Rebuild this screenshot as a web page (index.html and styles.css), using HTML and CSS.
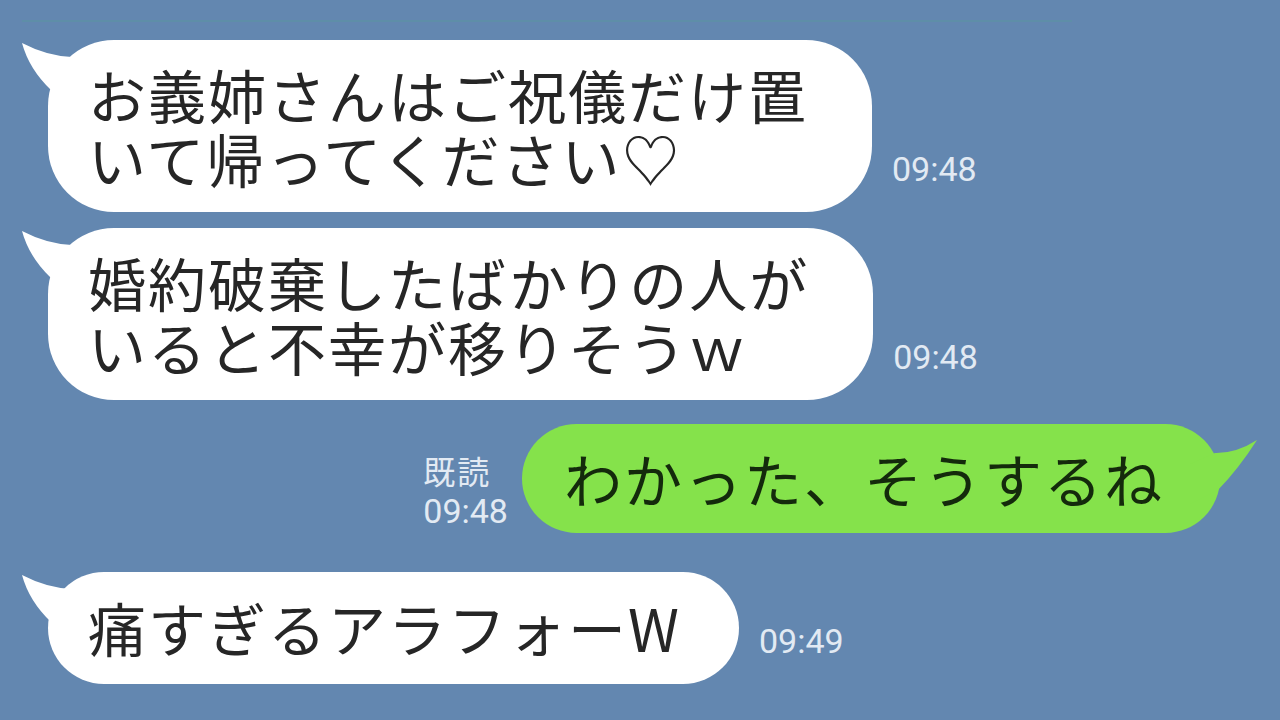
FILE: index.html
```html
<!DOCTYPE html>
<html lang="ja">
<head>
    <meta charset="UTF-8">
    <meta name="viewport" content="width=device-width, initial-scale=1.0">
    <title>トーク</title>
    <link rel="stylesheet" href="styles.css">
</head>
<body>

    <div class="chat">
        <div class="divider"></div>

        <div class="row">
            <div class="bubble">
                <svg class="tail" viewBox="-30 0 80 90"><path d="M-26 3 Q-1 16 24 17 L40 40 L20 80 L3 50 Q-19 29 -26 3 Z"/></svg>
                お義姉さんはご祝儀だけ置<br>いて帰ってください♡
            </div>
            <div class="time">09:48</div>
        </div>

        <div class="row">
            <div class="bubble">
                <svg class="tail" viewBox="-30 0 80 90"><path d="M-26 3 Q-1 16 24 17 L40 40 L20 80 L3 50 Q-19 29 -26 3 Z"/></svg>
                婚約破棄したばかりの人が<br>いると不幸が移りそうｗ
            </div>
            <div class="time">09:48</div>
        </div>

        <div class="row mine">
            <div class="receipt">
                <div class="read">既読</div>
                <div class="stamp">09:48</div>
            </div>
            <div class="bubble green">
                <svg class="tail" viewBox="-40 0 80 90"><path d="M37 16 Q16 29.5 -5 29 L-30 40 L-30 80 L-2 66 Q18.5 45 37 16 Z"/></svg>
                わかった、そうするね
            </div>
        </div>

        <div class="row">
            <div class="bubble single">
                <svg class="tail" viewBox="-30 0 80 90"><path d="M-26 3 Q-1 16 24 17 L40 40 L20 80 L3 50 Q-19 29 -26 3 Z"/></svg>
                痛すぎるアラフォーW
            </div>
            <div class="time">09:49</div>
        </div>
    </div>

</body>
</html>
```

FILE: styles.css
```css
body {
    margin: 0;
    height: 100vh;
    overflow: hidden;
    background-color: #6387b0;
    font-family: "Noto Sans CJK JP", "Noto Sans", sans-serif;
}

.chat {
    display: flex;
    flex-direction: column;
    padding-top: 20px;
}

.divider {
    margin-left: 22px;
    width: 1050px;
    height: 2px;
    background: #5e8ea8;
    margin-bottom: 18px;
}

.row {
    display: flex;
    align-items: flex-end;
    padding-left: 48px;
    margin-bottom: 16px;
}

.row.mine {
    justify-content: flex-end;
    padding-left: 0;
    padding-right: 60px;
    margin-top: 8px;
    margin-bottom: 39px;
}

.bubble {
    position: relative;
    background: #ffffff;
    color: #262626;
    border-radius: 66px;
    padding: 22px 64px 22px 40px;
    font-size: 58px;
    letter-spacing: 2px;
    line-height: 64px;
    white-space: nowrap;
}

.bubble.single {
    padding-top: 23px;
    padding-bottom: 25px;
    padding-right: 58px;
    border-radius: 56px;
}

.bubble.green {
    background: #85e24b;
    color: #142a0c;
    border-radius: 56px;
    padding: 22px 56px 23px 42px;
}

.tail {
    position: absolute;
    left: -30px;
    top: 0;
    width: 80px;
    height: 90px;
    fill: #ffffff;
}

.green .tail {
    left: auto;
    right: -40px;
    fill: #85e24b;
}

.time {
    margin-left: 20px;
    margin-bottom: 26px;
    font-family: Roboto, "Noto Sans", sans-serif;
    font-size: 34px;
    line-height: 1;
    color: #e2eaf3;
}

.receipt {
    margin-right: 14px;
    margin-bottom: 5px;
    color: #e2eaf3;
    line-height: 1;
}

.receipt .read {
    font-size: 32px;
    letter-spacing: 2px;
    margin-bottom: 8px;
}

.receipt .stamp {
    font-family: Roboto, "Noto Sans", sans-serif;
    font-size: 34px;
}
```
